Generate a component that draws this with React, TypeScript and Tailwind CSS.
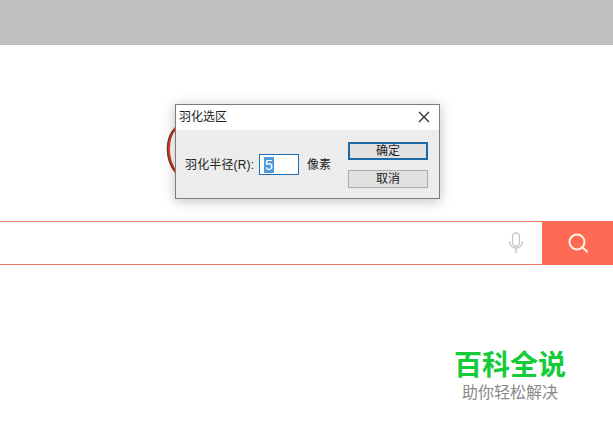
import React from "react";

const cjk = "font-['Liberation_Sans','Noto_Sans_CJK_SC',sans-serif]";

export default function App() {
  return (
    <div className={`relative w-[613px] h-[435px] overflow-hidden bg-white ${cjk}`}>
      <div className="h-[45px] bg-[#bfbfbf]" />
      <div className="mt-[176px] flex h-[44px] items-stretch">
        <div className="flex flex-1 items-center justify-end border-y border-[#e8766a] bg-white pr-[18px]">
          <svg width="16" height="22" viewBox="0 0 16 22" fill="none" stroke="#c4c4c4" strokeWidth="1.3">
            <rect x="4.5" y="1" width="7" height="13" rx="3.5" />
            <path d="M1.5 9.5c0 4 3 6.5 6.5 6.5s6.500-2.500 6.500-6.500M8 16v5" />
          </svg>
        </div>
        <div className="flex w-[71px] items-center justify-center bg-[#ff6a55]">
          <svg width="22" height="22" viewBox="0 0 22 22" fill="none" stroke="#fff3e6" strokeWidth="2">
            <circle cx="10" cy="10" r="7.500" />
            <path d="M15.500 15.500l4.500 4" strokeLinecap="round" />
          </svg>
        </div>
      </div>

      <svg className="absolute left-[160px] top-[122px]" width="20" height="56" viewBox="0 0 20 56" fill="none">
        <path d="M16 6C6 15 6 38 16 50" stroke="#cf3f25" strokeWidth="3" />
        <path d="M14 8C5 17 5 36 14 48" stroke="#3a2a28" strokeWidth="0.8" />
      </svg>

      <div className="absolute left-[175px] top-[104px] flex h-[95px] w-[265px] flex-col border border-[#7d7d78] bg-[#ececec] shadow-[0_2px_12px_rgba(0,0,0,0.25)]">
        <div className="flex h-[25px] shrink-0 items-center justify-between bg-white pb-[2px] pl-[3px] pr-[9px]">
          <span className="text-[12px] leading-none text-[#222]">羽化选区</span>
          <svg width="12" height="12" viewBox="0 0 12 12" stroke="#222" strokeWidth="1.100">
            <path d="M1 1l10 10M11 1L1 11" />
          </svg>
        </div>
        <div className="flex flex-1 items-start pl-[9px] pr-[11px] pt-[12px]">
          <div className="mt-[12px] flex items-center text-[12px] leading-none text-[#222]">
            <span className="w-[74px] whitespace-nowrap tracking-[0.15px]">羽化半径(R):</span>
            <div className="flex h-[21px] w-[40px] items-center border border-[#1e6fb3] bg-white pl-[4px]">
              <span className="bg-[#4f9be0] px-px text-[14px] leading-[16px] text-white">5</span>
            </div>
            <span className="ml-[8px] whitespace-nowrap">像素</span>
          </div>
          <div className="ml-auto flex w-[80px] flex-col gap-[10px]">
            <div className="flex h-[18px] items-center justify-center border-2 border-[#1c6aa8] bg-[#e1e1e1] text-[12px] leading-none text-[#222]">确定</div>
            <div className="flex h-[18px] items-center justify-center border border-[#acacac] bg-[#e1e1e1] text-[12px] leading-none text-[#222]">取消</div>
          </div>
        </div>
      </div>

      <div className="absolute left-[454px] top-[350px] flex flex-col">
        <span className="text-[28px] font-bold leading-[32px] whitespace-nowrap text-[#14cb3a]">百科全说</span>
        <span className="ml-[8px] text-[16px] leading-[22px] whitespace-nowrap text-[#8a8a8a]">助你轻松解决</span>
      </div>
    </div>
  );
}
